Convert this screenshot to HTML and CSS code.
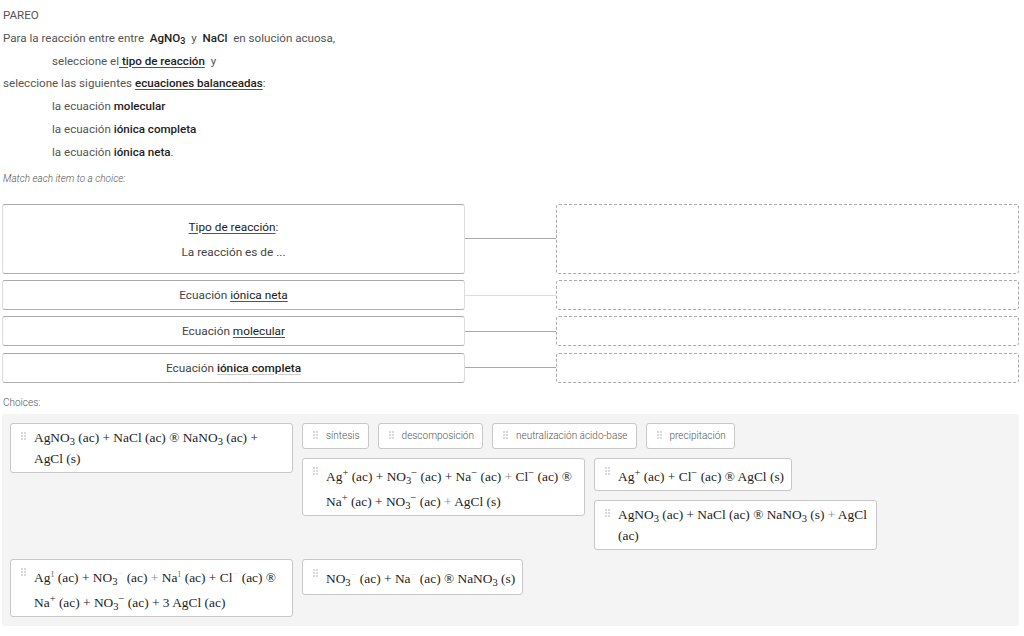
FILE: index.html
```html
<!DOCTYPE html>
<html lang="es">
<head>
<meta charset="utf-8">
<title>Pareo</title>
<link rel="stylesheet" href="styles.css">
</head>
<body>
<div class="page">
  <div class="intro">
    <p class="line">PAREO</p>
    <p class="line">Para la reacción entre entre&nbsp; <b>AgNO<sub>3</sub></b>&nbsp; y&nbsp; <b>NaCl</b>&nbsp; en solución acuosa,</p>
    <p class="line indent">seleccione el<u class="strong"> tipo de reacción</u>&nbsp; y</p>
    <p class="line">seleccione las siguientes <u class="strong">ecuaciones balanceadas</u>:</p>
    <p class="line indent">la ecuación <b>molecular</b></p>
    <p class="line indent">la ecuación <b>iónica completa</b></p>
    <p class="line indent">la ecuación <b>iónica neta</b>.</p>
  </div>
  <p class="hint">Match each item to a choice:</p>

  <div class="match">
    <div class="prompt tall">
      <div class="ptext"><u>Tipo de reacción</u>:</div>
      <div class="ptext second">La reacción es de ...</div>
    </div>
    <div class="link"><span class="wire"></span></div>
    <div class="drop"></div>

    <div class="prompt">
      <div class="ptext">Ecuación <u>iónica neta</u></div>
    </div>
    <div class="link"><span class="wire light"></span></div>
    <div class="drop"></div>

    <div class="prompt">
      <div class="ptext">Ecuación <u>molecular</u></div>
    </div>
    <div class="link"><span class="wire"></span></div>
    <div class="drop"></div>

    <div class="prompt">
      <div class="ptext">Ecuación <b class="ul-light">iónica completa</b></div>
    </div>
    <div class="link"><span class="wire"></span></div>
    <div class="drop"></div>
  </div>

  <p class="choices-label">Choices:</p>
  <div class="bank">
    <div class="item eq">
      <svg class="grip" viewBox="0 0 5 8"><circle cx="1" cy="1" r=".7"/><circle cx="4" cy="1" r=".7"/><circle cx="1" cy="4" r=".7"/><circle cx="4" cy="4" r=".7"/><circle cx="1" cy="7" r=".7"/><circle cx="4" cy="7" r=".7"/></svg>
      <span class="formula">AgNO<sub>3</sub> (ac) + NaCl (ac) ® NaNO<sub>3</sub> (ac) + AgCl (s)</span>
    </div>
    <div class="item chip">
      <svg class="grip" viewBox="0 0 5 8"><circle cx="1" cy="1" r=".7"/><circle cx="4" cy="1" r=".7"/><circle cx="1" cy="4" r=".7"/><circle cx="4" cy="4" r=".7"/><circle cx="1" cy="7" r=".7"/><circle cx="4" cy="7" r=".7"/></svg>
      <span>síntesis</span>
    </div>
    <div class="item chip">
      <svg class="grip" viewBox="0 0 5 8"><circle cx="1" cy="1" r=".7"/><circle cx="4" cy="1" r=".7"/><circle cx="1" cy="4" r=".7"/><circle cx="4" cy="4" r=".7"/><circle cx="1" cy="7" r=".7"/><circle cx="4" cy="7" r=".7"/></svg>
      <span>descomposición</span>
    </div>
    <div class="item chip">
      <svg class="grip" viewBox="0 0 5 8"><circle cx="1" cy="1" r=".7"/><circle cx="4" cy="1" r=".7"/><circle cx="1" cy="4" r=".7"/><circle cx="4" cy="4" r=".7"/><circle cx="1" cy="7" r=".7"/><circle cx="4" cy="7" r=".7"/></svg>
      <span>neutralización ácido-base</span>
    </div>
    <div class="item chip">
      <svg class="grip" viewBox="0 0 5 8"><circle cx="1" cy="1" r=".7"/><circle cx="4" cy="1" r=".7"/><circle cx="1" cy="4" r=".7"/><circle cx="4" cy="4" r=".7"/><circle cx="1" cy="7" r=".7"/><circle cx="4" cy="7" r=".7"/></svg>
      <span>precipitación</span>
    </div>
    <div class="item eq">
      <svg class="grip" viewBox="0 0 5 8"><circle cx="1" cy="1" r=".7"/><circle cx="4" cy="1" r=".7"/><circle cx="1" cy="4" r=".7"/><circle cx="4" cy="4" r=".7"/><circle cx="1" cy="7" r=".7"/><circle cx="4" cy="7" r=".7"/></svg>
      <span class="formula">Ag<sup>+</sup> (ac) + NO<sub>3</sub><sup>−</sup> (ac) + Na<sup>−</sup> (ac) <span class="faint">+</span> Cl<sup>−</sup> (ac) ® Na<sup>+</sup> (ac) + NO<sub>3</sub><sup>−</sup> (ac) <span class="faint">+</span> AgCl (s)</span>
    </div>
    <div class="item eq">
      <svg class="grip" viewBox="0 0 5 8"><circle cx="1" cy="1" r=".7"/><circle cx="4" cy="1" r=".7"/><circle cx="1" cy="4" r=".7"/><circle cx="4" cy="4" r=".7"/><circle cx="1" cy="7" r=".7"/><circle cx="4" cy="7" r=".7"/></svg>
      <span class="formula">Ag<sup>+</sup> (ac) + Cl<sup>−</sup> (ac) ® AgCl (s)</span>
    </div>
    <div class="item eq">
      <svg class="grip" viewBox="0 0 5 8"><circle cx="1" cy="1" r=".7"/><circle cx="4" cy="1" r=".7"/><circle cx="1" cy="4" r=".7"/><circle cx="4" cy="4" r=".7"/><circle cx="1" cy="7" r=".7"/><circle cx="4" cy="7" r=".7"/></svg>
      <span class="formula">AgNO<sub>3</sub> (ac) + NaCl (ac) ® NaNO<sub>3</sub> (s) <span class="faint">+</span> AgCl (ac)</span>
    </div>
    <div class="item eq">
      <svg class="grip" viewBox="0 0 5 8"><circle cx="1" cy="1" r=".7"/><circle cx="4" cy="1" r=".7"/><circle cx="1" cy="4" r=".7"/><circle cx="4" cy="4" r=".7"/><circle cx="1" cy="7" r=".7"/><circle cx="4" cy="7" r=".7"/></svg>
      <span class="formula">Ag<sup class="thin">1</sup> (ac) + NO<sub>3</sub><sup class="ghost">−</sup> (ac) <span class="faint">+</span> Na<sup class="thin">1</sup> (ac) + Cl<sup class="ghost">−</sup> (ac) ® Na<sup>+</sup> (ac) + NO<sub>3</sub><sup>−</sup> (ac) + 3 AgCl (ac)</span>
    </div>
    <div class="item eq roomy">
      <svg class="grip" viewBox="0 0 5 8"><circle cx="1" cy="1" r=".7"/><circle cx="4" cy="1" r=".7"/><circle cx="1" cy="4" r=".7"/><circle cx="4" cy="4" r=".7"/><circle cx="1" cy="7" r=".7"/><circle cx="4" cy="7" r=".7"/></svg>
      <span class="formula">NO<sub>3</sub><sup class="ghost">−</sup> (ac) + Na<sup class="ghost">−</sup> (ac) ® NaNO<sub>3</sub> (s)</span>
    </div>
  </div>
</div>
</body>
</html>
```

FILE: styles.css
```css
* { box-sizing: border-box; }

html, body {
  margin: 0;
  padding: 0;
  background: #ffffff;
}

body {
  font-family: Roboto, "Liberation Sans", Arial, sans-serif;
  font-size: 11.6px;
  color: #444;
}

.page {
  padding: 4px 5px 0 2px;
}

.intro {
  padding-left: 1px;
}

.line {
  margin: 0;
  line-height: 22.83px;
  font-weight: 400;
  color: #555;
}

.line b {
  font-weight: 500;
  color: #222;
}

.line sub {
  font-size: 9px;
  vertical-align: -2px;
  line-height: 0;
}

.indent {
  padding-left: 49px;
}

u.strong {
  font-weight: 500;
  color: #222;
  text-decoration-color: #555;
  text-underline-offset: 2px;
}

.hint {
  margin: 7px 0 0 1px;
  font-size: 10px;
  font-style: italic;
  font-weight: 300;
  color: #555;
  line-height: 16px;
}

/* matching area */
.match {
  display: grid;
  grid-template-columns: 463px 91px 463px;
  row-gap: 6.33px;
  margin-top: 17px;
}

.prompt {
  height: 30px;
  border: 1px solid #c9c9c9;
  border-top-color: #aaa;
  border-bottom-color: #b0b0b0;
  border-left-color: #ddd;
  border-right-color: #ddd;
  border-radius: 3px;
  display: flex;
  flex-direction: column;
  justify-content: center;
  align-items: center;
  background: #fff;
}

.prompt.tall {
  height: 70px;
  justify-content: flex-start;
  padding-top: 14px;
}

.ptext {
  font-size: 11.8px;
  font-weight: 400;
  color: #444;
  line-height: 16px;
}

.ptext.second {
  margin-top: 9px;
}

.ptext u {
  text-decoration-color: #555;
  text-underline-offset: 2px;
  font-weight: 400;
  color: #222;
}

.ptext b.ul-light {
  font-weight: 500;
  color: #222;
  text-decoration: underline;
  text-decoration-color: #ccc;
  text-underline-offset: 2px;
}

.link {
  display: flex;
  align-items: center;
}

.wire {
  display: block;
  width: 100%;
  height: 1px;
  background: #a9a9a9;
}

.wire.light {
  background: #dedede;
}

.drop {
  border: 1px dashed #a8a8a8;
  border-radius: 3px;
}

/* choices */
.choices-label {
  margin: 12px 0 0 1px;
  font-size: 10px;
  font-weight: 300;
  color: #555;
  line-height: 16px;
}

.bank {
  margin-top: 3px;
  width: 1017px;
  background: #f4f4f4;
  border-radius: 3px;
  padding: 9px 0 0 8px;
  display: flow-root;
  min-height: 212px;
}

.item {
  float: left;
  margin: 0 9px 9px 0;
  background: #fff;
  border: 1px solid #c8c8c8;
  border-radius: 3px;
  display: flex;
}

.grip {
  width: 5px;
  height: 8px;
  fill: #9a9a9a;
  flex: none;
}

.chip {
  height: 26px;
  align-items: center;
  padding: 0 8px 0 10px;
  font-size: 10px;
  font-weight: 300;
  color: #555;
  margin-right: 9px;
}

.chip .grip {
  margin-right: 8px;
  margin-top: -2px;
}

.eq {
  max-width: 283px;
  padding: 3px 7px 3px 10px;
  align-items: flex-start;
}

.eq.roomy {
  padding-top: 4px;
  padding-bottom: 5px;
}

.eq .grip {
  margin-top: 5px;
  margin-right: 8px;
}

.formula {
  font-family: "Liberation Serif", "Times New Roman", serif;
  font-size: 13.4px;
  color: #222;
  line-height: 21px;
}

.formula sub,
.formula sup {
  font-size: 10.5px;
}

.formula sub {
  vertical-align: -3px;
  line-height: 0;
}

.formula sup {
  vertical-align: 5px;
}

.faint {
  color: #888;
}

.ghost {
  color: #e4e4e4;
}

.thin {
  font-size: 8px !important;
  color: #666;
}
```
